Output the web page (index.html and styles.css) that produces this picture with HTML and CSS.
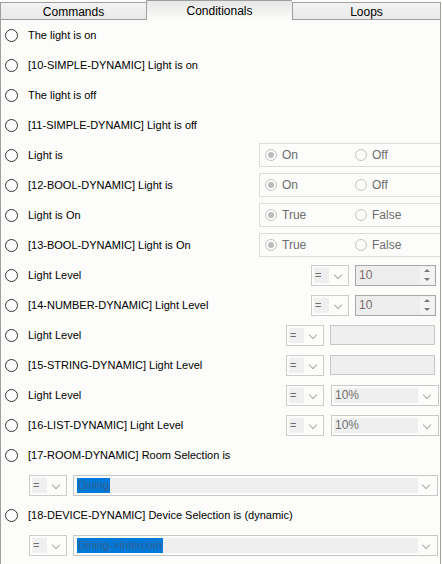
FILE: index.html
```html
<!DOCTYPE html>
<html>
<head>
<meta charset="utf-8">
<link rel="stylesheet" href="styles.css">
</head>
<body>
<div class="win">
  <div class="tabs">
    <div class="tab tab-first">Commands</div>
    <div class="tab tab-sel">Conditionals</div>
    <div class="tab tab-last">Loops</div>
  </div>
  <div class="panel">
    <div class="row"><span class="radio"></span><span class="lbl">The light is on</span></div>
    <div class="row"><span class="radio"></span><span class="lbl">[10-SIMPLE-DYNAMIC] Light is on</span></div>
    <div class="row"><span class="radio"></span><span class="lbl">The light is off</span></div>
    <div class="row"><span class="radio"></span><span class="lbl">[11-SIMPLE-DYNAMIC] Light is off</span></div>

    <div class="row"><span class="radio"></span><span class="lbl">Light is</span>
      <div class="group"><span class="opt"><span class="mini on"></span>On</span><span class="opt"><span class="mini"></span>Off</span></div></div>
    <div class="row"><span class="radio"></span><span class="lbl">[12-BOOL-DYNAMIC] Light is</span>
      <div class="group"><span class="opt"><span class="mini on"></span>On</span><span class="opt"><span class="mini"></span>Off</span></div></div>
    <div class="row"><span class="radio"></span><span class="lbl">Light is On</span>
      <div class="group"><span class="opt"><span class="mini on"></span>True</span><span class="opt"><span class="mini"></span>False</span></div></div>
    <div class="row"><span class="radio"></span><span class="lbl">[13-BOOL-DYNAMIC] Light is On</span>
      <div class="group"><span class="opt"><span class="mini on"></span>True</span><span class="opt"><span class="mini"></span>False</span></div></div>

    <div class="row"><span class="radio"></span><span class="lbl">Light Level</span>
      <div class="ctrls num-ctrls"><div class="op"><span class="op-val">=</span><span class="chev"></span></div>
      <div class="spin"><span class="spin-val">10</span><span class="spin-btns"><span class="sb"><span class="tri-up"></span></span><span class="sb"><span class="tri-dn"></span></span></span></div></div></div>
    <div class="row"><span class="radio"></span><span class="lbl">[14-NUMBER-DYNAMIC] Light Level</span>
      <div class="ctrls num-ctrls"><div class="op"><span class="op-val">=</span><span class="chev"></span></div>
      <div class="spin"><span class="spin-val">10</span><span class="spin-btns"><span class="sb"><span class="tri-up"></span></span><span class="sb"><span class="tri-dn"></span></span></span></div></div></div>

    <div class="row"><span class="radio"></span><span class="lbl">Light Level</span>
      <div class="ctrls str-ctrls"><div class="op"><span class="op-val">=</span><span class="chev"></span></div><div class="text"></div></div></div>
    <div class="row"><span class="radio"></span><span class="lbl">[15-STRING-DYNAMIC] Light Level</span>
      <div class="ctrls str-ctrls"><div class="op"><span class="op-val">=</span><span class="chev"></span></div><div class="text"></div></div></div>

    <div class="row"><span class="radio"></span><span class="lbl">Light Level</span>
      <div class="ctrls list-ctrls"><div class="op"><span class="op-val">=</span><span class="chev"></span></div><div class="drop"><span class="drop-val">10%</span><span class="chev"></span></div></div></div>
    <div class="row"><span class="radio"></span><span class="lbl">[16-LIST-DYNAMIC] Light Level</span>
      <div class="ctrls list-ctrls"><div class="op"><span class="op-val">=</span><span class="chev"></span></div><div class="drop"><span class="drop-val">10%</span><span class="chev"></span></div></div></div>

    <div class="row"><span class="radio"></span><span class="lbl">[17-ROOM-DYNAMIC] Room Selection is</span></div>
    <div class="subrow"><div class="op"><span class="op-val">=</span><span class="chev"></span></div><div class="drop wide"><span class="drop-val"><span class="hl">Dining</span></span><span class="chev"></span></div></div>
    <div class="row row-b"><span class="radio"></span><span class="lbl">[18-DEVICE-DYNAMIC] Device Selection is (dynamic)</span></div>
    <div class="subrow"><div class="op"><span class="op-val">=</span><span class="chev"></span></div><div class="drop wide"><span class="drop-val"><span class="hl">Dining-&gt;Intercom</span></span><span class="chev"></span></div></div>
  </div>
</div>
</body>
</html>
```
FILE: styles.css
```css
html, body {
  margin: 0;
  padding: 0;
  background: #fcfcfa;
}
.win {
  width: 442px;
  height: 564px;
  font-family: "Liberation Sans", Arial, sans-serif;
  font-size: 11px;
  color: #000;
  overflow: hidden;
}
.tabs {
  display: flex;
  height: 20px;
  width: 441px;
  align-items: flex-end;
  box-sizing: border-box;
}
.tab {
  box-sizing: border-box;
  height: 18px;
  display: flex;
  align-items: center;
  justify-content: center;
  border: 1px solid #a0a0a0;
  border-right: none;
  background: linear-gradient(#f3f3f3, #e9e9e9);
  font-size: 12px;
  padding-top: 1px;
}
.tab-first { width: 146px; }
.tab-sel {
  width: 146px;
  height: 20px;
  border-bottom: none;
  background: linear-gradient(#e6e6e6, #fcfcfa);
}
.tab-last {
  width: 149px;
  border-left: 1px solid #a0a0a0;
  border-right: 1px solid #a0a0a0;
}
.panel {
  box-sizing: border-box;
  width: 441px;
  height: 544px;
  border-left: 1px solid #a0a0a0;
  border-right: 1px solid #a0a0a0;
  display: flex;
  flex-direction: column;
}
.row {
  height: 30px;
  display: flex;
  align-items: center;
  flex: none;
}
.radio {
  box-sizing: border-box;
  width: 13px;
  height: 13px;
  border: 1px solid #333;
  border-radius: 50%;
  margin-left: 4px;
  margin-right: 10px;
  background: #fff;
  flex: none;
}
.lbl {
  flex: 1;
  white-space: nowrap;
}
.group {
  box-sizing: border-box;
  width: 181px;
  height: 24px;
  border: 1px solid #dcdcdc;
  border-right: none;
  display: flex;
  align-items: center;
  color: #6d6d6d;
  font-size: 12px;
}
.opt {
  display: flex;
  align-items: center;
  width: 90px;
  padding-left: 5px;
}
.mini {
  box-sizing: border-box;
  width: 12px;
  height: 12px;
  border: 1px solid #c4c4c4;
  border-radius: 50%;
  margin-right: 5px;
  position: relative;
  background: #fcfcfa;
}
.mini.on::after {
  content: "";
  position: absolute;
  left: 2px;
  top: 2px;
  width: 6px;
  height: 6px;
  border-radius: 50%;
  background: #bcbcbc;
}
.ctrls {
  display: flex;
  align-items: center;
}
.num-ctrls { margin-right: 4px; gap: 6px; }
.str-ctrls { margin-right: 5px; gap: 6px; }
.list-ctrls { margin-right: 1px; gap: 7px; }
.op {
  box-sizing: border-box;
  width: 38px;
  height: 21px;
  border: 1px solid #cccccc;
  display: flex;
  align-items: center;
  padding-left: 2px;
  position: relative;
  flex: none;
}
.op-val {
  width: 15px;
  height: 15px;
  background: #efefef;
  color: #6d6d6d;
  font-size: 11px;
  line-height: 15px;
  padding-left: 1px;
  box-sizing: border-box;
}
.chev {
  position: absolute;
  top: 6px;
  right: 7px;
  width: 5px;
  height: 5px;
  border-right: 1px solid #aaa;
  border-bottom: 1px solid #aaa;
  transform: rotate(45deg);
}
.spin {
  box-sizing: border-box;
  width: 81px;
  height: 21px;
  border: 1px solid #a8a8a8;
  background: #ededed;
  display: flex;
  align-items: center;
  position: relative;
}
.spin-val {
  flex: 1;
  padding-left: 3px;
  color: #7a6a6a;
  font-size: 12px;
}
.spin-btns {
  display: flex;
  flex-direction: column;
  width: 14px;
  height: 17px;
  margin-right: 1px;
  gap: 1px;
}
.sb {
  flex: 1;
  background: #f4f4f4;
  display: flex;
  align-items: center;
  justify-content: center;
}
.tri-up {
  width: 0; height: 0;
  border-left: 3px solid transparent;
  border-right: 3px solid transparent;
  border-bottom: 3px solid #777;
}
.tri-dn {
  width: 0; height: 0;
  border-left: 3px solid transparent;
  border-right: 3px solid transparent;
  border-top: 3px solid #777;
}
.text {
  box-sizing: border-box;
  width: 105px;
  height: 20px;
  border: 1px solid #c8c8c8;
  background: #efefef;
}
.drop {
  box-sizing: border-box;
  width: 108px;
  height: 21px;
  border: 1px solid #c8c8c8;
  display: flex;
  align-items: center;
  padding-left: 2px;
  position: relative;
}
.drop .chev { right: 8px; }
.drop-val {
  width: 84px;
  height: 15px;
  background: #efefef;
  color: #707070;
  font-size: 12px;
  line-height: 15px;
  padding-left: 1px;
  box-sizing: border-box;
  white-space: nowrap;
}
.drop.wide {
  width: 365px;
  padding-left: 3px;
}
.drop.wide .drop-val {
  width: 341px;
  padding-left: 0;
  font-size: 11px;
}
.hl {
  display: inline-block;
  background: #0078d7;
  color: #3a5f8f;
  padding: 0 1px;
  height: 15px;
}
.subrow {
  display: flex;
  align-items: center;
  height: 30px;
  padding-left: 28px;
  gap: 6px;
  flex: none;
}
```
